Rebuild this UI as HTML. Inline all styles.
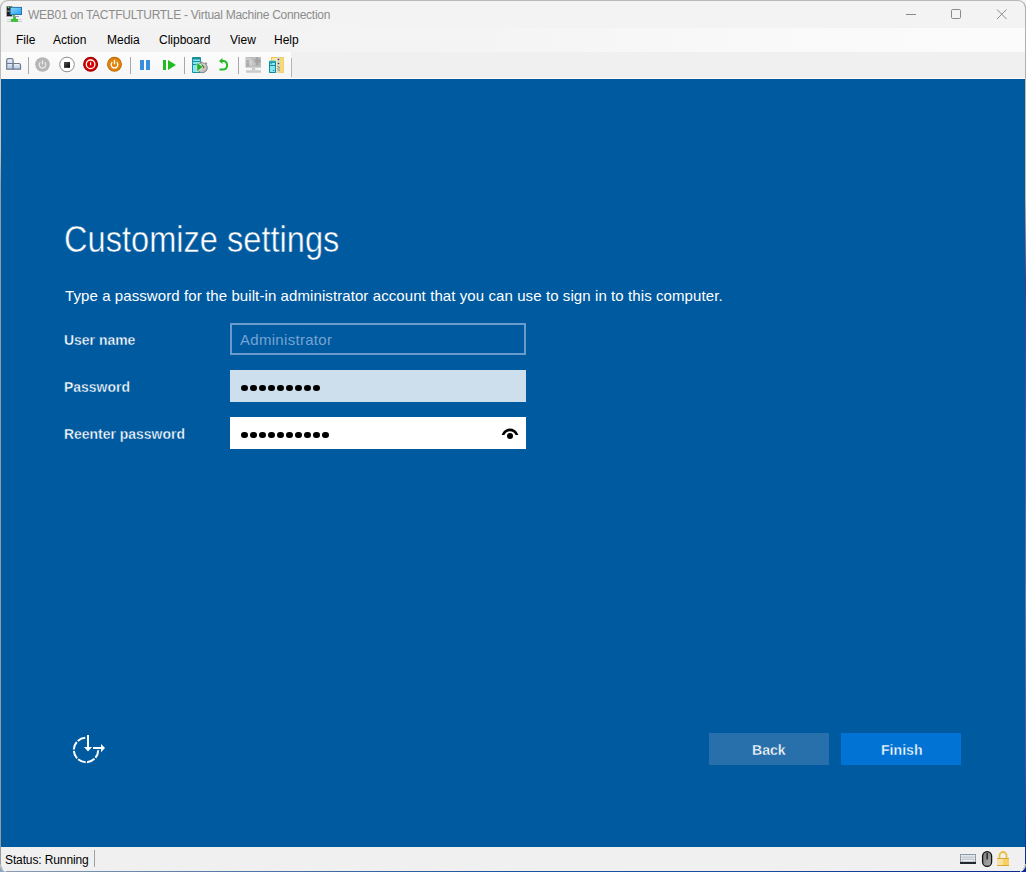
<!DOCTYPE html>
<html><head><meta charset="utf-8">
<style>
html,body{margin:0;padding:0;width:1026px;height:872px;overflow:hidden;}
body{position:relative;font-family:"Liberation Sans",sans-serif;background:#f4f4f4;}
#desk{position:absolute;left:0;top:436px;width:1026px;height:436px;background:linear-gradient(90deg,#8ea6be 0%,#5f7aa0 50%,#0a2a92 100%);}
.abs{position:absolute;}
#win{position:absolute;left:0;top:0;width:1026px;height:872px;background:#f3f3f3;border-radius:8px;overflow:hidden;box-sizing:border-box;}
#frame{position:absolute;left:0;top:0;width:1026px;height:872px;border-radius:8px;box-sizing:border-box;border:1px solid #b8b8b8;border-right-color:#a8a8a8;border-bottom-color:transparent;border-left-color:#b0b0b0;pointer-events:none;}
#title{position:absolute;left:28px;top:8px;font-size:12px;letter-spacing:-0.28px;color:#8c8c8c;white-space:nowrap;}
.menu{position:absolute;top:33px;font-size:12px;color:#000;white-space:nowrap;}
#menubar{position:absolute;left:1px;top:28px;width:1024px;height:24px;background:#f2f2f2;}
#menuright{position:absolute;left:292px;top:28px;width:733px;height:24px;background:linear-gradient(90deg,#f3f3f3 0%,#f5f5f5 30%,#f9f9f9 65%,#fbfbfb 100%);}
#toolbar{position:absolute;left:1px;top:52px;width:290px;height:26px;background:linear-gradient(#fcfcfc,#f6f6f6);}
#tbright{position:absolute;left:291px;top:52px;width:734px;height:26px;background:#f0f0f0;}
#whiteline{position:absolute;left:1px;top:78px;width:1024px;height:1px;background:#fffaf5;}
#blue{position:absolute;left:1px;top:79px;width:1024px;height:768px;background:#005a9f;}
#status{position:absolute;left:1px;top:847px;width:1024px;height:25px;background:#f0f0f0;}
.lbl{position:absolute;left:64px;font-size:15px;font-weight:bold;color:#fff;white-space:nowrap;transform-origin:0 0;transform:scaleX(0.93);-webkit-text-stroke:0.4px #005a9f;}
.box{position:absolute;left:230px;width:296px;height:32px;box-sizing:border-box;}
.dots{position:absolute;left:11px;top:14.6px;height:6.4px;line-height:0;white-space:nowrap;}
.dot{display:inline-block;width:6.7px;height:6.4px;border-radius:50%;background:#000;margin-right:2.3px;vertical-align:top;}
.btn{position:absolute;top:733px;width:120px;height:32px;}
.btxt{position:absolute;top:8px;font-size:15px;font-weight:bold;color:#fff;white-space:nowrap;transform-origin:0 0;transform:scaleX(0.94);}
</style></head><body>
<div id="desk"></div>
<div id="win">
  <!-- title bar -->
  <svg class="abs" style="left:0;top:0" width="30" height="28" viewBox="0 0 30 28">
    <defs><linearGradient id="scr" x1="0" y1="0" x2="1" y2="1"><stop offset="0" stop-color="#8ad4ff"/><stop offset="1" stop-color="#22a4f6"/></linearGradient></defs>
    <rect x="6.3" y="6.1" width="6" height="10.6" fill="#8a8a8a"/>
    <rect x="7" y="6.8" width="5" height="9.2" fill="#1e1e1e"/>
    <rect x="7.2" y="10.5" width="3" height="1.2" fill="#999"/>
    <circle cx="8.5" cy="7.6" r="0.8" fill="#44ff44"/>
    <rect x="9.8" y="6.9" width="12.2" height="8.1" fill="#2a6aa0"/>
    <rect x="10.8" y="7.8" width="10.3" height="6.4" fill="url(#scr)"/>
    <rect x="12.9" y="15" width="2.2" height="1.3" fill="#44c044"/>
    <rect x="12.9" y="16.2" width="6.1" height="0.7" fill="#6a7fa0"/>
    <rect x="7.1" y="19" width="14.8" height="0.9" fill="#d0d0d0"/>
    <rect x="7.1" y="21" width="14.8" height="0.9" fill="#c8c8c8"/>
    <rect x="12.9" y="17" width="3.1" height="2" fill="#44c044"/>
    <rect x="10.9" y="19" width="7.1" height="2.9" fill="#3cc03c"/>
  </svg>
  <div id="title">WEB01 on TACTFULTURTLE - Virtual Machine Connection</div>
  <svg class="abs" style="left:890px;top:0" width="136" height="28" viewBox="890 0 136 28">
    <line x1="906" y1="14.5" x2="916" y2="14.5" stroke="#8a8a8a" stroke-width="1"/>
    <rect x="951.5" y="9.5" width="9" height="9" rx="1.2" fill="none" stroke="#8a8a8a" stroke-width="1"/>
    <path d="M997 9.5 L1006.5 19 M1006.5 9.5 L997 19" stroke="#8a8a8a" stroke-width="1" fill="none"/>
  </svg>
  <!-- menubar -->
  <div id="menubar"></div>
  <div id="menuright"></div>
  <div class="menu" style="left:16px">File</div>
  <div class="menu" style="left:53px">Action</div>
  <div class="menu" style="left:107px">Media</div>
  <div class="menu" style="left:159px">Clipboard</div>
  <div class="menu" style="left:230px">View</div>
  <div class="menu" style="left:274px">Help</div>
  <!-- toolbar -->
  <div id="toolbar"></div>
  <div id="tbright"></div>
  <svg class="abs" style="left:0;top:52px" width="300" height="27" viewBox="0 52 300 27">
    <defs>
      <linearGradient id="key" x1="0" y1="0" x2="0" y2="1"><stop offset="0" stop-color="#e4ecf8"/><stop offset="1" stop-color="#b9cbe6"/></linearGradient>
      <linearGradient id="sq" x1="0" y1="0" x2="1" y2="1"><stop offset="0" stop-color="#555"/><stop offset="1" stop-color="#000"/></linearGradient>
    </defs>
    <!-- ctrl alt del keys -->
    <path d="M6.7 69.2 V60 Q6.9 58.7 8.2 58.7 H11.6 Q12.9 58.7 13.1 60 V69.2 Z" fill="url(#key)" stroke="#6e7a8e" stroke-width="1.2"/>
    <line x1="6.7" y1="63.5" x2="13.1" y2="63.5" stroke="#6e7a8e" stroke-width="1.2"/>
    <path d="M13.1 69.2 V63.5 H19 Q20.3 63.6 20.5 65 V69.2 Z" fill="url(#key)" stroke="#6e7a8e" stroke-width="1.2"/>
    <path d="M8.5 59.8 H11.5 M8.5 64.6 H11.5 M15 64.6 H19" stroke="#f0f6ff" stroke-width="0.8"/>
    <!-- separators -->
    <rect x="28" y="57" width="1" height="17" fill="#a8a8a8"/>
    <rect x="130" y="57" width="1" height="17" fill="#a8a8a8"/>
    <rect x="184" y="57" width="1" height="17" fill="#a8a8a8"/>
    <rect x="238" y="57" width="1" height="17" fill="#a8a8a8"/>
    <rect x="291" y="58" width="1" height="19" fill="#b4b4b4"/>
    <!-- gray power -->
    <circle cx="42.5" cy="64.5" r="7.3" fill="#b5b5b5"/>
    <path d="M40.3 62.3 A3.3 3.3 0 1 0 44.7 62.3" fill="none" stroke="#e8e8e8" stroke-width="1.3"/>
    <line x1="42.5" y1="60.3" x2="42.5" y2="64.5" stroke="#e8e8e8" stroke-width="1.3"/>
    <!-- stop -->
    <circle cx="67" cy="64.5" r="7.3" fill="#fff" stroke="#8c8c8c" stroke-width="1"/>
    <rect x="64" y="62" width="6" height="5.8" fill="url(#sq)"/>
    <!-- red -->
    <circle cx="90.6" cy="64.3" r="6.9" fill="#d80000" stroke="#a00000" stroke-width="1.2"/>
    <circle cx="90.6" cy="64.3" r="4.3" fill="none" stroke="#fff" stroke-width="1.3"/>
    <line x1="90.6" y1="62.3" x2="90.6" y2="65.3" stroke="#fff" stroke-width="1.2"/>
    <!-- orange -->
    <circle cx="114.5" cy="64.3" r="6.9" fill="#e2850e" stroke="#c06c00" stroke-width="1.1"/>
    <path d="M112.3 62.2 A3.3 3.3 0 1 0 116.7 62.2" fill="none" stroke="#fff" stroke-width="1.3"/>
    <line x1="114.5" y1="60" x2="114.5" y2="64.3" stroke="#fff" stroke-width="1.3"/>
    <!-- pause -->
    <rect x="140" y="60" width="4" height="10" fill="#3a8ee0"/>
    <rect x="146" y="60" width="4" height="10" fill="#3a8ee0"/>
    <!-- resume -->
    <rect x="163" y="60" width="3" height="10" fill="#22bb22"/>
    <path d="M168 60 L176 65 L168 70 Z" fill="#22bb22"/>
    <!-- checkpoint -->
    <rect x="192" y="57" width="9" height="16" rx="1" fill="#1a8e9c"/>
    <rect x="193" y="59.5" width="7" height="12.5" fill="#86e6f4"/>
    <rect x="193" y="61" width="7" height="1" fill="#1a8e9c"/>
    <rect x="193" y="64" width="7" height="1" fill="#1a8e9c"/>
    <defs><linearGradient id="swg" x1="0" y1="0" x2="1" y2="1"><stop offset="0" stop-color="#f4f4f4"/><stop offset="1" stop-color="#a8a8a8"/></linearGradient></defs>
    <rect x="200.3" y="61.5" width="2" height="2" fill="#9a9a9a"/>
    <rect x="205" y="62.5" width="2" height="2" fill="#9a9a9a" transform="rotate(40 206 63.5)"/>
    <circle cx="202.4" cy="67.8" r="4.9" fill="url(#swg)" stroke="#7a7a7a" stroke-width="0.9"/>
    <path d="M201.5 63.8 L204.5 66.5 L202 67.5 Z" fill="#2a8a2a"/>
    <path d="M196.8 62.3 L202.8 67 L196.8 71.8 Z" fill="#22b022" stroke="#fff" stroke-width="0.5"/>
    <circle cx="203.6" cy="67.6" r="0.7" fill="#e02020"/>
    <!-- revert -->
    <path d="M219.5 69.5 H223.5 A4.3 4.3 0 0 0 223.5 61 H221" fill="none" stroke="#22bb22" stroke-width="2"/>
    <path d="M219 61 L222.5 58 L222.5 64 Z" fill="#22bb22"/>
    <!-- gray monitor -->
    <rect x="245.5" y="57" width="15.5" height="10.6" fill="#bcbcbc"/>
    <rect x="246.3" y="58" width="4" height="1.5" fill="#d0d0d0"/>
    <rect x="246.3" y="60.5" width="2.5" height="1.5" fill="#a8a8a8"/>
    <rect x="246.3" y="63" width="3" height="3.5" fill="#aaaaaa"/>
    <rect x="249.5" y="59.5" width="2.5" height="6" fill="#d2d2d2"/>
    <rect x="252.5" y="61" width="2" height="4" fill="#c8c8c8"/>
    <rect x="256" y="57.3" width="2.5" height="8" fill="#a4a4a4"/>
    <rect x="254.5" y="59.5" width="6" height="3" fill="#a4a4a4"/>
    <rect x="252" y="67.6" width="3" height="2.4" fill="#c4c4c4"/>
    <rect x="250" y="67.6" width="7" height="0.8" fill="#d8d8d8"/>
    <rect x="246" y="70" width="15" height="3" fill="#d4d4d4"/>
    <rect x="246" y="71.3" width="15" height="0.6" fill="#c4c4c4"/>
    <!-- zip folder -->
    <rect x="271" y="57" width="12.8" height="16" fill="#f2c84c"/>
    <rect x="272" y="58" width="5" height="14.5" fill="#fbe8a6"/>
    <rect x="280.3" y="58" width="2.6" height="14.5" fill="#f9dc78"/>
    <rect x="277" y="57" width="3.2" height="16" fill="#d6d6d6"/>
    <circle cx="278.5" cy="59.5" r="0.8" fill="#333"/>
    <circle cx="278.5" cy="63.5" r="0.8" fill="#333"/>
    <circle cx="278" cy="66.3" r="0.6" fill="#7a6a30"/>
    <circle cx="279.2" cy="67.6" r="0.6" fill="#7a6a30"/>
    <circle cx="278" cy="68.9" r="0.6" fill="#7a6a30"/>
    <circle cx="279.2" cy="70.2" r="0.6" fill="#7a6a30"/>
    <rect x="269" y="60.8" width="7" height="12.2" rx="0.8" fill="#138a98"/>
    <rect x="269.5" y="61" width="6" height="1.6" fill="#24aebe"/>
    <rect x="270" y="63" width="5" height="2" fill="#86e6f4"/>
    <rect x="270.5" y="63.3" width="1.5" height="0.8" fill="#138a98"/>
    <rect x="270" y="66" width="5" height="6" fill="#86e6f4"/>
    <circle cx="273.7" cy="70.4" r="0.7" fill="#138a98"/>
  </svg>
  <div id="whiteline"></div>
  <!-- blue content -->
  <div id="blue"></div>
  <div class="abs" style="left:64px;top:219px;font-size:36.5px;color:#fff;white-space:nowrap;transform-origin:0 0;transform:scaleX(0.893);-webkit-text-stroke:0.5px #005a9f;">Customize settings</div>
  <div class="abs" style="left:65px;top:287px;font-size:15px;letter-spacing:0.09px;color:#fff;white-space:nowrap;">Type a password for the built-in administrator account that you can use to sign in to this computer.</div>
  <div class="lbl" style="top:331px">User name</div>
  <div class="lbl" style="top:378px">Password</div>
  <div class="lbl" style="top:425px">Reenter password</div>
  <div class="box" style="top:323px;border:2px solid #6b9bca;"><div class="abs" style="left:8px;top:6px;font-size:15px;letter-spacing:0.3px;color:#75a3d3;white-space:nowrap;">Administrator</div></div>
  <div class="box" style="top:370px;background:#cddeed;"><div class="dots"><span class="dot"></span><span class="dot"></span><span class="dot"></span><span class="dot"></span><span class="dot"></span><span class="dot"></span><span class="dot"></span><span class="dot"></span><span class="dot"></span></div></div>
  <div class="box" style="top:417px;background:#fff;"><div class="dots"><span class="dot"></span><span class="dot"></span><span class="dot"></span><span class="dot"></span><span class="dot"></span><span class="dot"></span><span class="dot"></span><span class="dot"></span><span class="dot"></span><span class="dot"></span></div>
    <svg class="abs" style="left:270px;top:10px" width="20" height="14" viewBox="500 427 20 14">
      <defs><clipPath id="eyeclip"><rect x="500" y="427" width="20" height="7.9"/></clipPath></defs>
      <path d="M510 428.6 A8.55 8.55 0 1 1 509.99 428.6 Z M510 431.15 A6.0 6.0 0 1 0 510.01 431.15 Z" fill="#000" fill-rule="evenodd" clip-path="url(#eyeclip)"/>
      <circle cx="510" cy="435.9" r="3" fill="#000"/>
    </svg>
  </div>
  <div class="btn" style="left:709px;background:#2870ab;"><div class="btxt" style="left:43px;-webkit-text-stroke:0.4px #2870ab">Back</div></div>
  <div class="btn" style="left:841px;background:#0073d4;"><div class="btxt" style="left:40px;-webkit-text-stroke:0.4px #0073d4">Finish</div></div>
  <!-- setup icon -->
  <svg class="abs" style="left:60px;top:725px" width="60" height="50" viewBox="60 725 60 50">
    <circle cx="86" cy="750" r="12.2" fill="none" stroke="#fff" stroke-width="2" stroke-dasharray="8.2 1.4" transform="rotate(-90 86 750)" />
    <rect x="86" y="730" width="20" height="20" fill="#005a9f"/>
    <line x1="88" y1="735" x2="88" y2="748" stroke="#fff" stroke-width="2"/>
    <path d="M84 747 L92 747 L88 751.5 Z" fill="#fff"/>
    <line x1="93" y1="748" x2="102" y2="748" stroke="#fff" stroke-width="2"/>
    <path d="M101 744 L105 748 L101 752.3 Z" fill="#fff"/>
  </svg>
  <!-- status -->
  <div id="status"></div>
  <div class="abs" style="left:5px;top:853px;font-size:12px;letter-spacing:-0.12px;color:#000;white-space:nowrap;">Status: Running</div>
  <div class="abs" style="left:94px;top:850px;width:1px;height:17px;background:#a0a0a0;"></div>
  <svg class="abs" style="left:955px;top:848px" width="60" height="22" viewBox="955 848 60 22">
    <rect x="960" y="854" width="16" height="10" fill="#8d9aa8"/>
    <rect x="961" y="855" width="14" height="6.5" fill="#f4f6f8"/>
    <path d="M961 857.2 H975 M961 859.4 H975" stroke="#a0aab4" stroke-width="0.7"/>
    <path d="M963 855 V857 M965 855 V857 M967 855 V857 M969 855 V857 M971 855 V857 M973 855 V857 M964 857.5 V859 M966 857.5 V859 M968 857.5 V859 M970 857.5 V859 M972 857.5 V859 M962.5 859.6 V861.5 M973.5 859.6 V861.5" stroke="#b4bcc4" stroke-width="0.6"/>
    <rect x="960" y="862" width="16" height="2" fill="#222a30"/>
    <defs><linearGradient id="mouseg" x1="0" y1="0" x2="1" y2="1"><stop offset="0" stop-color="#7a7a7a"/><stop offset="1" stop-color="#b0b0b0"/></linearGradient></defs>
    <rect x="982.6" y="851.6" width="9" height="14.8" rx="4.5" fill="url(#mouseg)" stroke="#111" stroke-width="1.3"/>
    <rect x="986.4" y="853" width="1.5" height="6.5" fill="#2a2a2a"/>
    <path d="M999.5 858 V855.5 A3.5 3.5 0 0 1 1006.5 855.5 V858" fill="none" stroke="#e8c040" stroke-width="1.8"/>
    <rect x="997" y="858" width="12" height="8" fill="#f8d060"/>
    <rect x="997" y="858" width="6" height="7" fill="#f5e2a4"/>
    <rect x="997" y="858" width="12" height="1" fill="#d8a830"/>
    <rect x="997" y="865" width="12" height="1" fill="#d8a830"/>
  </svg>
</div>
<div id="frame"></div>
<div class="abs" style="left:6px;top:871px;width:1014px;height:1px;background:linear-gradient(90deg,#8a9cb0 0%,#4f74a8 25%,#1c52a0 50%,#1a4aa0 75%,#0a2a90 100%);"></div>
<div class="abs" style="left:0;top:8px;width:1px;height:856px;background:linear-gradient(#bdbdbd 0px,#bdbdbd 70px,#d2c8c0 72px,#c8c0b8 140px,#959a9f 180px,#959a9f 856px);"></div>
<div class="abs" style="left:1025px;top:8px;width:1px;height:856px;background:linear-gradient(#b0b0b0 0px,#b0b0b0 70px,#c5b9b0 72px,#c5b9b0 190px,#3a3a8a 272px,#3e50b0 392px,#5a80b0 592px,#3a5aa8 752px,#0a2a90 856px);"></div>
</body></html>
